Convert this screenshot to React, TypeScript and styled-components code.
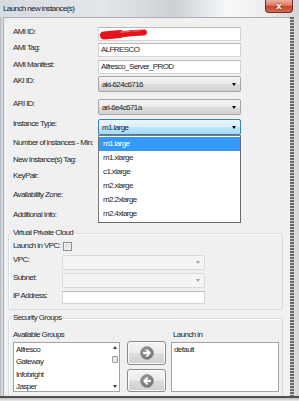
import React from 'react';
import styled, { createGlobalStyle } from 'styled-components';

const GlobalStyle = createGlobalStyle`
  html, body {
    margin: 0;
    padding: 0;
    background: #ffffff;
  }
  body {
    font-family: "Liberation Sans", Arial, sans-serif;
    font-size: 8px;
    letter-spacing: -0.6px;
    color: #1e1e1e;
  }
  * {
    box-sizing: border-box;
  }
`;

const Window = styled.div`
  width: 299px;
  height: 401px;
  display: flex;
  flex-direction: column;
  overflow: hidden;
  background: #dfe4ea;
`;

const TitleBar = styled.div`
  height: 17px;
  flex: none;
  display: flex;
  align-items: flex-start;
  padding-left: 3px;
  background: linear-gradient(to right, #d6dbe1 0%, #e3e7eb 35%, #ccd1d6 58%, #f7f8f9 76%, #eceef0 88%, #d3d7db 100%);
`;

const TitleText = styled.span`
  line-height: 17px;
  color: #1b1b1b;
`;

const CloseButton = styled.div`
  width: 28px;
  height: 13px;
  margin-left: auto;
  margin-right: 6px;
  display: flex;
  align-items: center;
  justify-content: center;
  border: 1px solid #7d2b21;
  border-top: none;
  border-radius: 0 0 4px 4px;
  background: linear-gradient(#eab0a2, #db7a64 45%, #c4452c 52%, #d56a4f 100%);
  color: #ffffff;
  font-family: "DejaVu Sans", sans-serif;
  font-weight: bold;
  font-size: 9px;
  letter-spacing: 0;
  text-shadow: 0 0 2px #5a1a12;
`;

const Middle = styled.div`
  flex: 1;
  display: flex;
  min-height: 0;
`;

const LeftFrame = styled.div`
  width: 3px;
  flex: none;
  background: linear-gradient(to right, #b4bbc3, #dfe4ea);
`;

const Client = styled.div`
  width: 287px;
  flex: none;
  background: #f0f0f0;
  border-top: 1px solid #a9afb6;
  border-left: 1px solid #a9afb6;
  padding: 9px 7px 0 4px;
`;

const RightFrame = styled.div`
  flex: 1;
  background:
    repeating-linear-gradient(to bottom, #6a6a6a 0 2px, #cfcfcf 2px 3px) 0 0 / 4px 100% no-repeat,
    linear-gradient(to right, #e4e4e4, #d6d6d6);
`;

const BottomFrame = styled.div`
  height: 5px;
  flex: none;
  background: linear-gradient(#505050 0 2px, #bdbdbd 2px, #ececec);
`;

const FormSection = styled.div`
  padding-left: 5px;
`;

const FormRow = styled.div<{ $h: number }>`
  display: flex;
  align-items: flex-start;
  height: ${(p) => p.$h}px;
`;

const FieldLabel = styled.span<{ $w?: number }>`
  width: ${(p) => p.$w ?? 85}px;
  flex: none;
  line-height: 10px;
  white-space: nowrap;
`;

const TextBox = styled.div<{ $h?: number }>`
  position: relative;
  width: 143px;
  height: ${(p) => p.$h ?? 14}px;
  background: #ffffff;
  border: 1px solid #d4d4d4;
  border-top-color: #b9b9b9;
  padding-left: 2px;
  line-height: ${(p) => (p.$h ?? 14) - 2}px;
  white-space: nowrap;
  overflow: hidden;
`;

const Redaction = styled.svg`
  position: absolute;
  left: 1px;
  top: 0;
`;

const Combo = styled.div<{ $variant?: 'normal' | 'active' | 'disabled'; $h?: number }>`
  position: relative;
  width: 143px;
  height: ${(p) => p.$h ?? 16}px;
  display: flex;
  align-items: center;
  justify-content: space-between;
  padding: 0 4px 0 3px;
  border-radius: 2px;
  border: 1px solid
    ${(p) => (p.$variant === 'active' ? '#3c7fb1' : p.$variant === 'disabled' ? '#d9d9d9' : '#a6a6a6')};
  background: ${(p) =>
    p.$variant === 'active'
      ? 'linear-gradient(#eaf6fd, #d9f0fc 50%, #bee6fd 51%, #a7d9f5)'
      : p.$variant === 'disabled'
        ? '#f4f4f4'
        : 'linear-gradient(#f3f3f3, #ebebeb 50%, #dddddd 51%, #d2d2d2)'};
`;

const ComboArrow = styled.span<{ $muted?: boolean }>`
  width: 0;
  height: 0;
  border-left: 2.5px solid transparent;
  border-right: 2.5px solid transparent;
  border-top: 3px solid ${(p) => (p.$muted ? '#a0a0a0' : '#000000')};
  margin-left: auto;
`;

const DropList = styled.div`
  position: absolute;
  top: 15px;
  left: -1px;
  width: 143px;
  padding: 1px 0;
  background: #ffffff;
  border: 1px solid #7a7a7a;
  border-right-color: #6a6a6a;
  border-bottom-color: #6a6a6a;
  z-index: 2;
`;

const DropItem = styled.div<{ $selected?: boolean }>`
  height: 14px;
  line-height: 14px;
  padding-left: 4px;
  background: ${(p) => (p.$selected ? '#3399ff' : 'transparent')};
  color: ${(p) => (p.$selected ? '#ffffff' : '#1e1e1e')};
`;

const GroupBox = styled.fieldset<{ $mt?: number }>`
  margin: ${(p) => p.$mt ?? 0}px 0 0 0;
  padding: 3px 0 5px 4px;
  border: 1px solid #d3dce2;
  border-radius: 3px;
  box-shadow: inset 1px 1px 0 #ffffff;
  min-width: 0;
`;

const GroupTitle = styled.legend`
  padding: 0 1px;
  margin-left: -1px;
  line-height: 10px;
`;

const CheckBox = styled.span`
  width: 9px;
  height: 9px;
  margin-top: 1px;
  margin-left: 1px;
  border: 1px solid #8e8f8f;
  background: linear-gradient(135deg, #d6d6d6, #f6f6f6);
  box-shadow: inset 0 0 0 1px #f0f0f0;
`;

const GroupsRow = styled.div`
  display: flex;
  padding-top: 4px;
`;

const GroupColumn = styled.div<{ $w: number; $pl?: number }>`
  width: ${(p) => p.$w}px;
  display: flex;
  flex-direction: column;
  span {
    padding-left: ${(p) => p.$pl ?? 0}px;
  }
`;

const ListBox = styled.div`
  height: 50px;
  margin-top: 2px;
  display: flex;
  background: #ffffff;
  border: 1px solid #a3a3a3;
`;

const ListItems = styled.div`
  flex: 1;
  padding: 1px 0 0 2px;
`;

const ListItem = styled.div`
  line-height: 12.4px;
  white-space: nowrap;
`;

const ScrollBar = styled.div`
  width: 8px;
  display: flex;
  flex-direction: column;
  align-items: center;
  padding: 3px 0;
`;

const ScrollArrow = styled.span<{ $down?: boolean }>`
  width: 0;
  height: 0;
  border-left: 2px solid transparent;
  border-right: 2px solid transparent;
  ${(p) => (p.$down ? 'border-top: 3px solid #404040;' : 'border-bottom: 3px solid #404040;')}
  ${(p) => (p.$down ? 'margin-top: auto;' : '')}
`;

const ScrollThumb = styled.span`
  width: 6px;
  height: 7px;
  margin-top: 7px;
  border: 1px solid #9c9c9c;
  border-radius: 1px;
  background: linear-gradient(to right, #f4f4f4, #e2e2e2);
`;

const ButtonColumn = styled.div`
  width: 39px;
  margin: 0 5px 0 7px;
  padding-top: 11px;
  display: flex;
  flex-direction: column;
  gap: 4px;
`;

const MoveButton = styled.div<{ $h: number }>`
  height: ${(p) => p.$h}px;
  display: flex;
  align-items: center;
  justify-content: center;
  border: 1px solid #8a8a8a;
  border-radius: 3px;
  background: linear-gradient(#f4f4f4, #ececec 48%, #dddddd 52%, #cfcfcf);
  box-shadow: inset 0 0 0 1px #fbfbfb;
`;

const ArrowIcon = ({ dir }: { dir: 'right' | 'left' }) => (
  <svg width="14" height="14" viewBox="0 0 14 14">
    <defs>
      <radialGradient id={`ag-${dir}`} cx="45%" cy="40%" r="60%">
        <stop offset="0%" stopColor="#a9a9a9" />
        <stop offset="100%" stopColor="#6f6f6f" />
      </radialGradient>
    </defs>
    <circle cx="7" cy="7" r="6.5" fill={`url(#ag-${dir})`} stroke="#8c8c8c" strokeWidth="0.5" />
    {dir === 'right' ? (
      <path d="M3.8 7H9.6M6.9 4.2L9.7 7L6.9 9.8" stroke="#ffffff" strokeWidth="1.8" fill="none" strokeLinecap="round" strokeLinejoin="round" />
    ) : (
      <path d="M10.2 7H4.4M7.1 4.2L4.3 7L7.1 9.8" stroke="#ffffff" strokeWidth="1.8" fill="none" strokeLinecap="round" strokeLinejoin="round" />
    )}
  </svg>
);

const instanceTypes = ['m1.large', 'm1.xlarge', 'c1.xlarge', 'm2.xlarge', 'm2.2xlarge', 'm2.4xlarge'];
const availableGroups = ['Alfresco', 'Gateway', 'Infobright', 'Jasper'];

const App = () => {
  return (
    <>
      <GlobalStyle />
      <Window>
        <TitleBar>
          <TitleText>Launch new instance(s)</TitleText>
          <CloseButton>x</CloseButton>
        </TitleBar>
        <Middle>
          <LeftFrame />
          <Client>
            <FormSection>
              <FormRow $h={16}>
                <FieldLabel>AMI ID:</FieldLabel>
                <TextBox>
                  <Redaction width="50" height="12" viewBox="0 0 50 12">
                    <path
                      d="M4 8C10 7.6 16 7 22 6.2C30 5.2 37 4.6 44 4.4"
                      stroke="#e8121a"
                      strokeWidth="6"
                      fill="none"
                      strokeLinecap="round"
                    />
                    <path d="M4 7.5L20 6" stroke="#e8121a" strokeWidth="8" strokeLinecap="round" />
                    <path d="M20 4.2L30 3.4M33 3L40 2.6" stroke="#f05a60" strokeWidth="1.4" strokeLinecap="round" />
                  </Redaction>
                </TextBox>
              </FormRow>
              <FormRow $h={17}>
                <FieldLabel>AMI Tag:</FieldLabel>
                <TextBox>ALFRESCO</TextBox>
              </FormRow>
              <FormRow $h={16}>
                <FieldLabel>AMI Manifest:</FieldLabel>
                <TextBox>Alfresco_Server_PROD</TextBox>
              </FormRow>
              <FormRow $h={23}>
                <FieldLabel>AKI ID:</FieldLabel>
                <Combo>
                  aki-624c6716
                  <ComboArrow />
                </Combo>
              </FormRow>
              <FormRow $h={20}>
                <FieldLabel>ARI ID:</FieldLabel>
                <Combo>
                  ari-6e4c671a
                  <ComboArrow />
                </Combo>
              </FormRow>
              <FormRow $h={19}>
                <FieldLabel>Instance Type:</FieldLabel>
                <Combo $variant="active">
                  m1.large
                  <ComboArrow />
                  <DropList>
                    {instanceTypes.map((t, i) => (
                      <DropItem key={t} $selected={i === 0}>
                        {t}
                      </DropItem>
                    ))}
                  </DropList>
                </Combo>
              </FormRow>
              <FormRow $h={17}>
                <FieldLabel>Number of instances - Min:</FieldLabel>
              </FormRow>
              <FormRow $h={16}>
                <FieldLabel>New Instance(s) Tag:</FieldLabel>
              </FormRow>
              <FormRow $h={19}>
                <FieldLabel>KeyPair:</FieldLabel>
              </FormRow>
              <FormRow $h={20}>
                <FieldLabel>Availability Zone:</FieldLabel>
              </FormRow>
              <FormRow $h={18}>
                <FieldLabel>Additional Info:</FieldLabel>
              </FormRow>
            </FormSection>

            <GroupBox>
              <GroupTitle>Virtual Private Cloud</GroupTitle>
              <FormRow $h={14}>
                <FieldLabel $w={49}>Launch in VPC:</FieldLabel>
                <CheckBox />
              </FormRow>
              <FormRow $h={18}>
                <FieldLabel $w={49}>VPC:</FieldLabel>
                <Combo $variant="disabled" $h={15}>
                  <ComboArrow $muted />
                </Combo>
              </FormRow>
              <FormRow $h={18}>
                <FieldLabel $w={49}>Subnet:</FieldLabel>
                <Combo $variant="disabled" $h={15}>
                  <ComboArrow $muted />
                </Combo>
              </FormRow>
              <FormRow $h={13}>
                <FieldLabel $w={49}>IP Address:</FieldLabel>
                <TextBox $h={13} />
              </FormRow>
            </GroupBox>

            <GroupBox $mt={3}>
              <GroupTitle>Security Groups</GroupTitle>
              <GroupsRow>
                <GroupColumn $w={107}>
                  <FieldLabel $w={107}>Available Groups</FieldLabel>
                  <ListBox>
                    <ListItems>
                      {availableGroups.map((g) => (
                        <ListItem key={g}>{g}</ListItem>
                      ))}
                    </ListItems>
                    <ScrollBar>
                      <ScrollArrow />
                      <ScrollThumb />
                      <ScrollArrow $down />
                    </ScrollBar>
                  </ListBox>
                </GroupColumn>
                <ButtonColumn>
                  <MoveButton $h={24}>
                    <ArrowIcon dir="right" />
                  </MoveButton>
                  <MoveButton $h={23}>
                    <ArrowIcon dir="left" />
                  </MoveButton>
                </ButtonColumn>
                <GroupColumn $w={108} $pl={2}>
                  <FieldLabel $w={108}>Launch in</FieldLabel>
                  <ListBox>
                    <ListItems>
                      <ListItem>default</ListItem>
                    </ListItems>
                  </ListBox>
                </GroupColumn>
              </GroupsRow>
            </GroupBox>
          </Client>
          <RightFrame />
        </Middle>
        <BottomFrame />
      </Window>
    </>
  );
};

export default App;
